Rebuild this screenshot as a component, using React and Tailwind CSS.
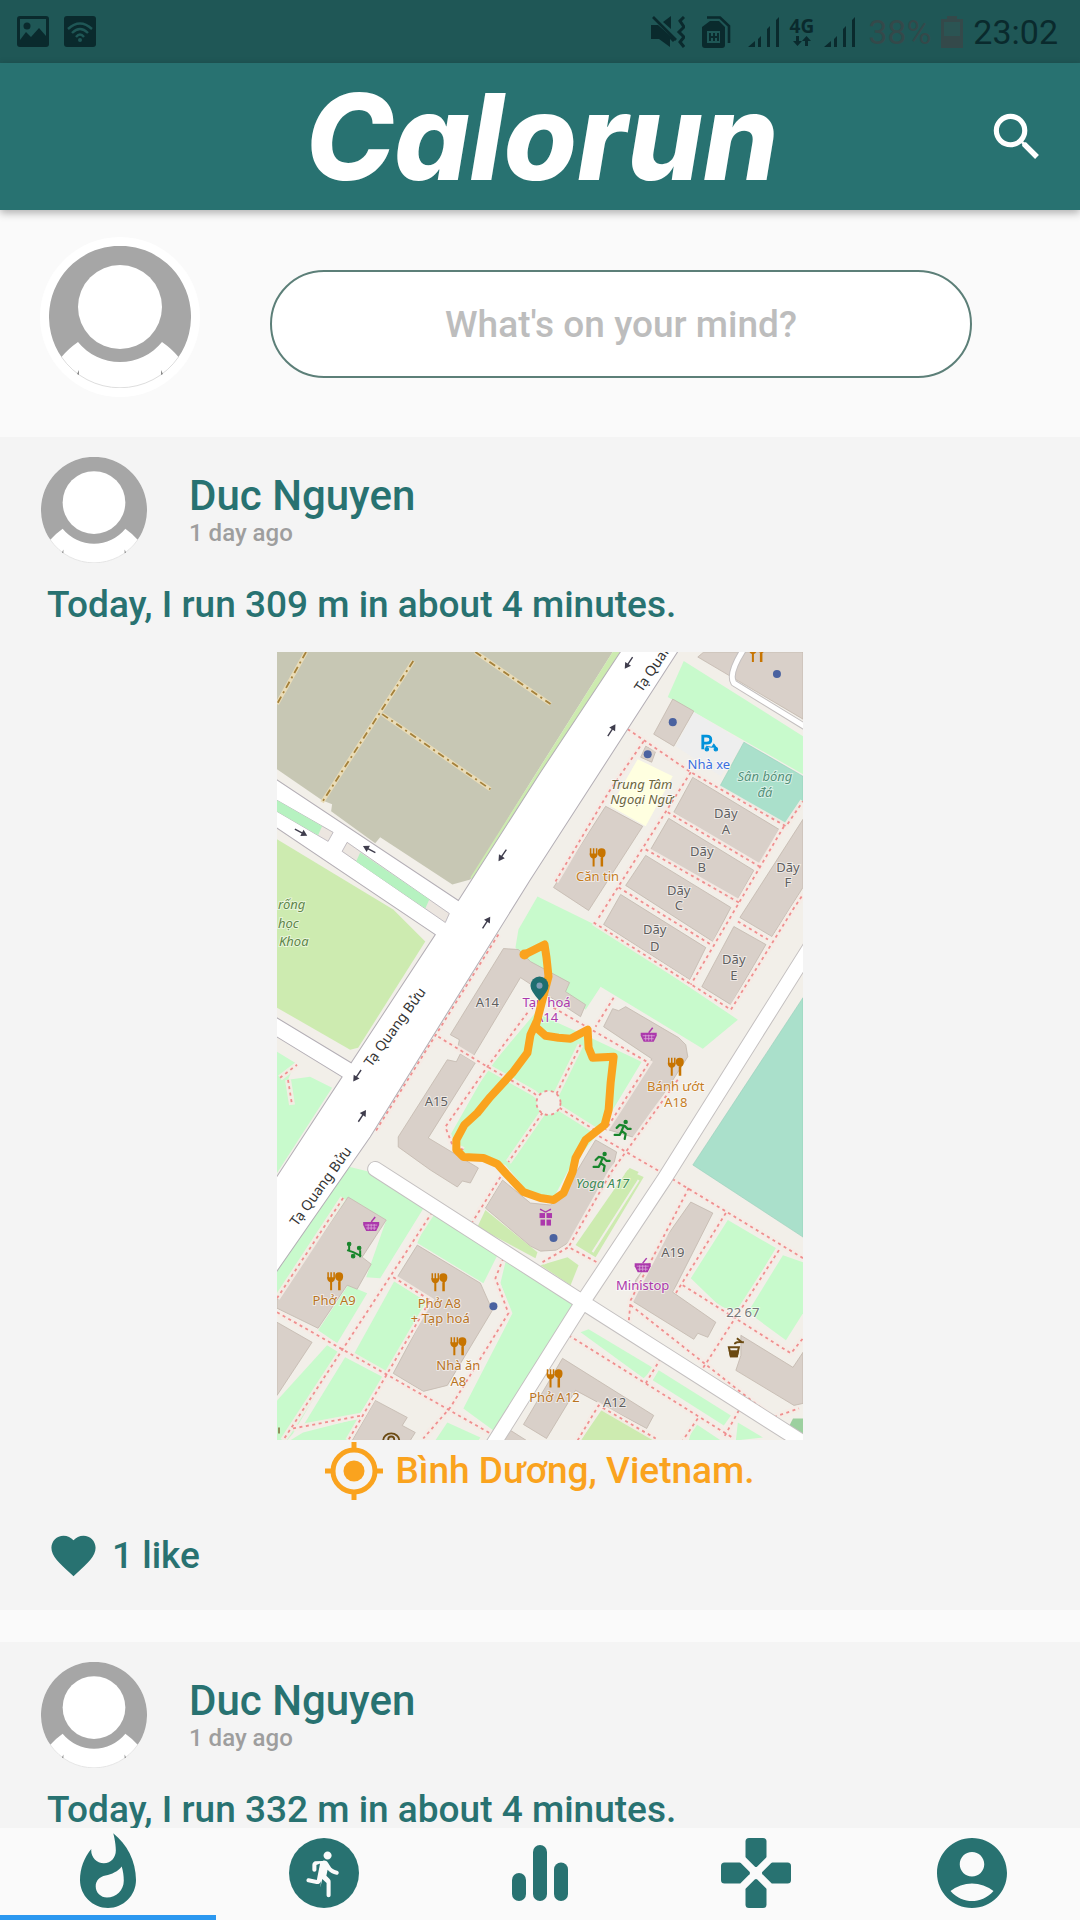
import React from "react";
import { MdSearch, MdWhatshot, MdAccountCircle, MdFavorite } from "react-icons/md";

const TEAL = "#287271";

/* ---------- status bar ---------- */

function Signal() {
  return (
    <svg width="32" height="32" viewBox="0 0 32 32" fill="currentColor" aria-hidden="true">
      <path d="M0 31 L7 25 V31 Z M10 23 L13 20 V31 H10 Z M19 13 L22 10 V31 H19 Z M28 4 L31 1 V31 H28 Z" />
    </svg>
  );
}

function StatusBar() {
  return (
    <div className="flex h-[63px] shrink-0 items-center justify-between bg-[#1f5756] pr-[22px] pl-[17px] text-[#0a2a2d]">
      <div className="flex gap-[15px]">
        <svg width="32" height="31" viewBox="0 0 32 31" aria-label="Image">
          <path fill="currentColor" fillRule="evenodd" d="M3 0H29Q32 0 32 3V28Q32 31 29 31H3Q0 31 0 28V3Q0 0 3 0ZM3 3V24L9 16L14 21L22 12L29 20V3Z" />
          <circle cx="10" cy="10" r="3.5" fill="currentColor" />
        </svg>
        <svg width="32" height="31" viewBox="0 0 32 31" aria-label="Wi-Fi">
          <rect width="32" height="31" rx="3" fill="currentColor" />
          <g fill="none" stroke="#1f5756" strokeWidth="2.4">
            <path d="M4 13Q16 2 28 13" />
            <path d="M8 17Q16 9 24 17" />
            <path d="M12 21Q16 16 20 21" />
          </g>
          <circle cx="16" cy="24" r="2" fill="#1f5756" />
        </svg>
      </div>
      <div className="flex items-center">
        <svg className="mr-[17px]" width="34" height="32" viewBox="0 0 34 32" aria-label="Vibrate">
          <path fill="currentColor" d="M0 9H7L24 24L22 26L19 23V31L8 23H0ZM12 6L20 0V13Z" />
          <path fill="none" stroke="currentColor" strokeWidth="2.6" d="M2 1L25 24" />
          <path fill="none" stroke="currentColor" strokeWidth="3" d="M33 1L29 5L33 11L28 16L33 21L29 26L33 31" />
        </svg>
        <svg className="mr-[17px]" width="29" height="32" viewBox="0 0 29 32" aria-label="SIM">
          <path fill="currentColor" fillRule="evenodd" d="M8 5H17L23 11V29Q23 32 20 32H3Q0 32 0 29V11ZM5 15V27H18V15Z" />
          <path fill="none" stroke="currentColor" strokeWidth="2" d="M8 17V25M12 17V25M16 17V25M8 21H16" />
          <path fill="none" stroke="currentColor" strokeWidth="2.6" d="M5 1.5H18L27 10V27" />
        </svg>
        <Signal />
        <div className="mx-[10px] flex flex-col items-center">
          <span className="font-['Open_Sans',sans-serif] text-[19px] leading-[18px] font-bold">4G</span>
          <svg width="18" height="12" viewBox="0 0 18 12" fill="currentColor" aria-hidden="true">
            <path d="M3 1H6V6H9L4.500 11L0 6H3ZM12 11H15V6H18L13.500 1L9 6H12Z" />
          </svg>
        </div>
        <Signal />
        <span className="ml-[12px] text-[34px] leading-[40px] text-[#34494a]">38%</span>
        <svg className="mx-[10px]" width="22" height="32" viewBox="0 0 22 32" aria-label="Battery">
          <path fill="#34494a" d="M6 0H16V3H22V32H0V3H6Z" />
          <rect x="3" y="6" width="16" height="14" fill="#2b5453" />
        </svg>
        <span className="text-[34px] leading-[40px]">23:02</span>
      </div>
    </div>
  );
}

/* ---------- avatar ---------- */

function Avatar({ className }) {
  return (
    <svg className={className} viewBox="0 0 142 142" role="img" aria-label="Avatar">
      <circle cx="71" cy="71" r="71" fill="#fff" stroke="none" />
      <path fill="#a6a6a6" d="M12.500 111A71 71 0 1 1 129.500 111Q123 103 113 96A54 54 0 0 1 29 96Q19 103 12.500 111Z" />
      <circle cx="71" cy="61" r="42" fill="#fff" />
      <path fill="none" stroke="#dedede" strokeWidth="1" d="M12.500 111A71 71 0 0 0 129.500 111" />
      <path fill="#8a8a8a" d="M28 128L30 124L30 129ZM114 128L112 124L112 129Z" />
    </svg>
  );
}

/* ---------- map ---------- */

const BUILDINGS = [
  "703,653 802,653 802,720 697,658",
  "672,700 693,712 673,747 653,735",
  "645,747 655,752 651,763 640,758",
  "605,807 642,827 588,911 553,888",
  "692,778 778,830 757,867 673,813",
  "668,819 753,871 735,903 650,850",
  "645,856 730,908 712,942 625,886",
  "620,895 705,948 689,980 603,925",
  "733,927 765,945 730,1005 701,987",
  "802,820 739,918 771,937 802,888",
  "503,949 518,950 530,962 569,983 565,992 585,1005 580,1017 520,978 472,1058 457,1050 459,1040 450,1035",
  "460,1054 475,1063 428,1138 478,1168 470,1183 462,1181 457,1187 430,1170 398,1147 398,1137 447,1060 456,1062",
  "625,1007 618,1011 612,1009 603,1027 651,1059 608,1130 635,1138 687,1057 685,1045 678,1038",
  "595,1140 616,1152 610,1178 567,1243 556,1250 540,1251 530,1246 485,1208 502,1180 530,1203 550,1205 565,1190",
  "690,1202 712,1213 672,1292 715,1322 707,1337 697,1333 693,1339 632,1301 635,1280",
  "740,1335 792,1367 802,1352 802,1403 793,1405 735,1370 740,1355",
  "562,1358 653,1415 646,1428 575,1390 546,1438 523,1424",
  "348,1197 386,1220 362,1257 371,1264 357,1289 347,1285 318,1328 277,1308 277,1300",
  "417,1245 480,1283 492,1310 447,1385 423,1391 393,1373 425,1313 432,1300 397,1277",
  "277,1322 312,1342 277,1395",
  "375,1400 407,1417 402,1425 415,1432 410,1440 352,1440",
  "507,1428 526,1440 500,1440",
];

const GREENS = [
  "683,662 802,737 802,775 667,698",
  "537,897 600,928 737,1020 702,1049 600,987 585,1010 530,965 515,948 518,930",
  "535,1013 590,1038 641,1062 600,1130 568,1170 553,1198 530,1195 505,1165 455,1150 450,1135 487,1070",
  "277,1052 295,1063 288,1080 310,1077 332,1088 277,1173",
  "342,1165 370,1172 424,1207 380,1278 366,1277 386,1220 348,1197 277,1300 277,1270",
  "348,1285 367,1293 337,1343 318,1330",
  "394,1281 427,1302 387,1373 352,1357",
  "430,1213 497,1255 483,1283 417,1243",
  "505,1262 530,1273 575,1303 493,1430 463,1408 512,1313 500,1283",
  "327,1345 340,1353 293,1433 287,1440 277,1440 277,1400",
  "345,1357 383,1377 360,1413 302,1427",
  "303,1432 358,1418 347,1440 290,1440",
  "447,1422 480,1437 478,1440 435,1440",
  "727,1220 775,1248 738,1310 720,1307 690,1278",
  "782,1255 802,1262 802,1313 785,1340 747,1312",
  "580,1332 588,1329 653,1368 643,1378",
  "658,1370 730,1415 723,1425 652,1380",
  "693,1422 720,1440 688,1440",
  "737,1422 762,1437 735,1440",
];

const GRASS = [
  "277,840 393,910 425,942 358,1048 350,1050 277,1008",
  "485,1210 537,1252 535,1258 477,1227",
  "627,1170 643,1177 595,1257 575,1245",
  "567,1257 578,1265 570,1285 540,1265",
  "629,1168 638,1172 634,1178 624,1174",
  "602,1408 655,1440 580,1440",
  "612,653 620,653 530,792 472,880 470,878 530,783",
];

const FOOTPATHS = [
  "498,935 375,1132",
  "438,1037 487,1067 533,1093 540,1099",
  "527,1013 487,1067 445,1127 452,1145 463,1150",
  "556,1094 580,1045",
  "559,1108 597,1132",
  "542,1113 508,1162",
  "627,730 690,773 785,827 802,802",
  "643,742 608,793 555,882",
  "690,773 597,920",
  "667,813 760,868",
  "645,850 738,903",
  "618,888 710,945",
  "593,923 730,1010 792,910 802,895",
  "783,827 690,985",
  "737,922 767,940",
  "553,1008 648,1063 605,1130",
  "613,998 595,1027",
  "593,1133 670,1178 802,1258",
  "677,1080 610,1173 568,1247",
  "542,1262 568,1247 598,1263",
  "688,1188 630,1300 628,1322",
  "725,1213 675,1293",
  "630,1305 772,1417 798,1408",
  "682,1285 790,1353 802,1338",
  "778,1250 702,1368",
  "568,1335 733,1438",
  "660,1358 645,1383",
  "738,1410 723,1437",
  "577,1440 598,1405 655,1438",
  "697,1418 682,1440",
  "343,1198 277,1298",
  "432,1212 283,1440",
  "277,1312 490,1433",
  "393,1277 430,1300 348,1440",
  "293,1428 362,1415",
  "503,1258 495,1278 508,1313 450,1407 423,1438",
  "500,1177 472,1222",
  "280,1078 297,1065",
  "288,1080 292,1105",
];

const TRACKS = ["306,653 277,705", "413,662 322,803", "382,715 490,790", "475,653 550,705"];

const LABELS = [
  ["Dãy", 725, 819, "#5f5f5f"], ["A", 725, 835, "#5f5f5f"],
  ["Dãy", 701, 857, "#5f5f5f"], ["B", 701, 873, "#5f5f5f"],
  ["Dãy", 678, 896, "#5f5f5f"], ["C", 678, 911, "#5f5f5f"],
  ["Dãy", 654, 934, "#5f5f5f"], ["D", 654, 951, "#5f5f5f"],
  ["Dãy", 733, 964, "#5f5f5f"], ["E", 733, 980, "#5f5f5f"],
  ["Dãy", 787, 873, "#5f5f5f"], ["F", 787, 888, "#5f5f5f"],
  ["A14", 487, 1007, "#5f5f5f"], ["A15", 436, 1106, "#5f5f5f"],
  ["A19", 672, 1257, "#5f5f5f"], ["A12", 614, 1407, "#5f5f5f"],
  ["22 67", 742, 1317, "#777"],
  ["Căn tin", 597, 882, "#c77d1e"],
  ["Phở A9", 334, 1305, "#b9741f"],
  ["Phở A8", 439, 1308, "#b9741f"], ["+ Tạp hoá", 440, 1323, "#b9741f"],
  ["Nhà ăn", 458, 1370, "#b9741f"], ["A8", 458, 1386, "#b9741f"],
  ["Phở A12", 554, 1402, "#b9741f"],
  ["Bánh ướt", 675, 1091, "#c77d1e"], ["A18", 675, 1107, "#c77d1e"],
  ["Ministop", 642, 1290, "#ac39ac"],
  ["Tạp hoá", 546, 1007, "#ac39ac"], ["A14", 546, 1022, "#ac39ac"],
  ["Nhà xe", 708, 770, "#3b6fe0"],
];

const ITALICS = [
  ["Sân bóng", 764, 782, "#55907a", "middle"], ["đá", 764, 798, "#55907a", "middle"],
  ["Trung Tâm", 641, 790, "#6b6540", "middle"], ["Ngoại Ngữ", 641, 805, "#6b6540", "middle"],
  ["Yoga A17", 602, 1188, "#3c8a55", "middle"],
  ["rống", 278, 910, "#60864a", "start"], ["học", 278, 928, "#60864a", "start"], ["Khoa", 279, 946, "#60864a", "start"],
];

function Fork({ x, y }) {
  return (
    <g transform={`translate(${x} ${y})`}>
      <path fill="none" stroke="#c77400" strokeWidth="1.500" d="M-7 -9V-3M-4 -9V-3M-1 -9V-3" />
      <path fill="#c77400" d="M-8 -4H0Q0 0 -3 1V9H-5V1Q-8 0 -8 -4ZM4 0Q0 -1 0 -5Q0 -9 4 -9Q8 -9 8 -5Q8 -1 5.500 0V9H3V0Z" />
    </g>
  );
}

function Basket({ x, y }) {
  return (
    <g transform={`translate(${x} ${y})`}>
      <path fill="#ac39ac" d="M-8 -2H8V1L5 7H-5L-8 1Z" />
      <path stroke="#d9a9d9" strokeWidth="0.800" d="M-6 1H6M-5 4H5M-3 0V6M0 0V6M3 0V6" />
      <path stroke="#ac39ac" strokeWidth="1.500" d="M0 -2L4 -7" />
    </g>
  );
}

function Runner({ x, y }) {
  return (
    <g transform={`translate(${x} ${y})`}>
      <circle cx="3" cy="-8" r="2.200" fill="#17852b" />
      <path fill="none" stroke="#17852b" strokeWidth="2.200" strokeLinecap="round" strokeLinejoin="round" d="M-6 -2L-3 -5L2 -4L5 -1H8M1 -4L-1 1L3 4L2 9M-1 1L-3 5H-8" />
    </g>
  );
}

function Arrow({ x, y, angle }) {
  return (
    <path transform={`translate(${x} ${y}) rotate(${angle})`} fill="#3f3d4d" d="M-7 -0.700H1V-3.500L7 0L1 3.500V0.700H-7Z" />
  );
}

function RouteMap() {
  const poly = (list, props) => list.map((p) => <polygon key={p} points={p} {...props} />);
  const lines = (list, props) => list.map((p) => <polyline key={p} points={p} fill="none" {...props} />);
  return (
    <svg className="w-[526px] max-w-full" viewBox="277 653 525 787" role="img" aria-label="Map of the run">
      <rect x="277" y="653" width="525" height="787" fill="#f2efe9" />
      <polygon points="277,653 612,653 530,783 470,880 452,885 380,838 375,844 331,812 332,805 322,801 277,770" fill="#c7c7b4" />
      {poly(GRASS, { fill: "#cdebb0" })}
      {poly(GREENS, { fill: "#c8facc" })}
      <polygon points="693,713 743,743 720,777 675,747" fill="#eeeeee" />
      <polygon points="743,743 802,777 802,802 785,827 719,787" fill="#aae0cb" stroke="#8fcab4" strokeWidth="0.500" />
      <polygon points="802,998 692,1165 802,1237" fill="#aae0cb" stroke="#8fcab4" strokeWidth="0.500" />
      <polygon points="637,760 672,777 645,827 610,807" fill="#ffffe0" />
      <polygon points="792,1418 802,1418 802,1435 788,1426" fill="#9cd09f" />
      <path d="M638 1180L592 1252" stroke="#f2efe9" strokeWidth="2" />
      {poly(BUILDINGS, { fill: "#d9d0c9", stroke: "#c3b8ae", strokeWidth: 0.8 })}

      {lines(TRACKS, { stroke: "#e9dcb8", strokeWidth: 4 })}
      {lines(TRACKS, { stroke: "#a5813a", strokeWidth: 1.8, strokeDasharray: "7 4 2 4" })}

      {lines(FOOTPATHS, { stroke: "#f5ebe6", strokeWidth: 6, strokeOpacity: 0.9 })}
      {lines(FOOTPATHS, { stroke: "#f08f8f", strokeWidth: 1.8, strokeDasharray: "3 3.500" })}
      <circle cx="548" cy="1103" r="12" fill="#f2efe9" stroke="#f08f8f" strokeWidth="1.800" strokeDasharray="3 3.500" />

      <g fill="none" strokeLinecap="round" strokeLinejoin="round">
        <g stroke="#c4c0c0">
          <path strokeWidth="16" d="M375 1169L582 1302L802 1442M812 943L663 1180L582 1302L492 1445" />
          <path strokeWidth="7" d="M743 650Q727 675 733 684L803 727" />
        </g>
        <g stroke="#fff">
          <path strokeWidth="14" d="M375 1169L582 1302L802 1442M812 943L663 1180L582 1302L492 1445" />
          <path strokeWidth="5" d="M743 650Q727 675 733 684L803 727" />
        </g>
      </g>
      <path
        fill="#fff"
        stroke="#b3aeb5"
        d="M270 776L458 901L540 773L623 648H680L530 880L370 1137L270 1281V1187L342 1077L270 1033V1014L351 1063L435 935L270 824Z"
      />
      <g stroke="#b3aeb5" strokeWidth="0.800">
        <polygon points="270,797 333,833 328,842 270,808" fill="#ece6e0" />
        <polygon points="347,843 449,914 445,923 342,852" fill="#ece6e0" />
        <polygon points="270,797 322,827 318,836 270,808" fill="#b6f2c0" stroke="none" />
        <polygon points="360,853 429,900 425,909 356,862" fill="#b6f2c0" stroke="none" />
      </g>

      <Arrow x={301} y={833} angle={28} />
      <Arrow x={369} y={850} angle={208} />
      <Arrow x={502} y={856} angle={124} />
      <Arrow x={486} y={923} angle={-57} />
      <Arrow x={628} y={664} angle={124} />
      <Arrow x={611} y={731} angle={-57} />
      <Arrow x={357} y={1076} angle={124} />
      <Arrow x={362} y={1116} angle={-57} />

      <g fill="#4a62a0">
        <circle cx="776" cy="675" r="4" />
        <circle cx="672" cy="723" r="4" />
        <circle cx="647" cy="755" r="4" />
        <circle cx="493" cy="1306" r="4" />
        <circle cx="553" cy="1238" r="4" />
      </g>
      <Fork x={756} y={654} />
      <Fork x={597} y={858} />
      <Fork x={675} y={1067} />
      <Fork x={335} y={1281} />
      <Fork x={439} y={1282} />
      <Fork x={458} y={1346} />
      <Fork x={554} y={1378} />
      <Basket x={648} y={1035} />
      <Basket x={371} y={1224} />
      <Basket x={642} y={1265} />
      <Runner x={622} y={1130} />
      <Runner x={601} y={1162} />
      <g fill="#17852b" stroke="#17852b">
        <circle cx="349" cy="1244" r="1.800" />
        <circle cx="359" cy="1248" r="1.800" />
        <circle cx="353" cy="1256" r="1.800" />
        <path fill="none" strokeWidth="2" d="M347 1250L353 1252L361 1256M349 1246V1251M360 1250V1257" />
      </g>
      <g fill="#ac39ac">
        <rect x="539" y="1213" width="5.500" height="5" />
        <rect x="546" y="1213" width="5.500" height="5" />
        <rect x="540" y="1219.500" width="4.500" height="6" />
        <rect x="546" y="1219.500" width="4.500" height="6" />
        <path fill="none" stroke="#ac39ac" strokeWidth="1.500" d="M545 1212Q538 1208 541 1210M545 1212Q552 1208 549 1210" />
      </g>
      <g fill="none" stroke="#6b4a12" strokeWidth="2">
        <path d="M728 1347H738L736 1356H730Z" />
        <path d="M729 1351H737L736 1356H730Z" fill="#6b4a12" />
        <path d="M734 1344Q734 1341 743 1342M736 1338L741 1342" />
      </g>
      <g fill="none" stroke="#6b4a12" strokeWidth="1.800">
        <path d="M383 1440A8 7 0 0 1 399 1440" />
        <circle cx="391" cy="1439" r="3" />
        <path d="M279 1427V1433" strokeWidth="1.200" />
      </g>
      <g fill="#0092da" stroke="#0092da">
        <path fill="none" strokeWidth="2.800" d="M702 750V737H706Q710 737 710 740.500Q710 744 706 744H702" />
        <circle cx="706" cy="750" r="1.800" />
        <circle cx="715" cy="750" r="1.800" />
        <path d="M705 747L711 748L713 745L716 749" />
      </g>

      <g fontFamily="'Noto Sans', 'Open Sans', sans-serif" fontSize="13" stroke="#fff" strokeOpacity="0.550" strokeWidth="2" paintOrder="stroke">
        {LABELS.map(([t, x, y, c]) => (
          <text key={t + x + y} x={x} y={y} fill={c} textAnchor="middle">{t}</text>
        ))}
        <g fontStyle="italic">
          {ITALICS.map(([t, x, y, c, a]) => (
            <text key={t} x={x} y={y} fill={c} textAnchor={a}>{t}</text>
          ))}
        </g>
        <g fill="#333" fontSize="14">
          <text transform="translate(371 1068) rotate(-54)">Tạ Quang Bửu</text>
          <text transform="translate(297 1227) rotate(-54)">Tạ Quang Bửu</text>
          <text transform="translate(641 694) rotate(-56)">Tạ Quan</text>
        </g>
      </g>

      <path
        fill="none"
        stroke="#faa31e"
        strokeWidth="8"
        strokeLinecap="round"
        strokeLinejoin="round"
        d="M524 955L544 945L546 958L548 977L535 1027L545 1036L558 1038L570 1039L587 1030L588 1048L592 1058L613 1057L610 1083L608 1110L604 1125L585 1140L575 1158L572 1172L563 1193L553 1200L540 1198L523 1192L506 1174L497 1164L483 1158L463 1157L456 1150L456 1140L464 1125L477 1113L490 1097L512 1073L527 1053L530 1035L536 1022"
      />
      <circle cx="524" cy="955" r="5" fill="#faa31e" />
      <path fill="#1f6e70" d="M539 1001Q530 991 530 986A9 9 0 0 1 548 986Q548 991 539 1001Z" />
      <circle cx="539" cy="986" r="3" fill="#7f9db4" />
    </svg>
  );
}

/* ---------- feed ---------- */

function Post({ name, time, text, place, likes }) {
  return (
    <article className="bg-[#f4f4f4] pt-[20px] pb-[28px]">
      <header className="flex items-center pl-[41px]">
        <Avatar className="size-[106px] shrink-0" />
        <div className="mt-[2px] ml-[42px]">
          <h2 className="text-[42px] leading-[44px] font-medium text-[#287271]">{name}</h2>
          <p className="text-[24px] leading-[30px] font-medium text-[#9e9e9e]">{time}</p>
        </div>
      </header>
      <p className="mt-[20px] pl-[47px] text-[37px] leading-[44px] font-medium text-[#287271]">{text}</p>
      <div className="mt-[25px] flex justify-center">
        <RouteMap />
      </div>
      <div className="flex items-center justify-center gap-[12px] text-[#faa31e]">
        <svg className="my-[2px]" width="58" height="58" viewBox="0 0 58 58" fill="none" stroke="currentColor" aria-hidden="true">
          <circle cx="29" cy="29" r="21" strokeWidth="5" />
          <circle cx="29" cy="29" r="10.500" fill="currentColor" stroke="none" />
          <path strokeWidth="5" d="M29 0V8M29 50V58M0 29H8M50 29H58" />
        </svg>
        <p className="text-[37px] leading-[44px] font-medium">{place}</p>
      </div>
      <button type="button" className="mt-[27px] ml-[47px] flex items-center gap-[12px] text-[37px] leading-[44px] font-medium text-[#287271]">
        <MdFavorite size={53} />
        {likes}
      </button>
    </article>
  );
}

/* ---------- bottom navigation ---------- */

const RunIcon = () => (
  <svg width="84" height="84" viewBox="0 0 24 24" aria-hidden="true">
    <circle cx="12" cy="12" r="10" fill={TEAL} />
    <g transform="translate(5.200 5) scale(0.580)">
      <path fill="#fafafa" d="M13.490 5.480c1.100 0 2-.9 2-2s-.9-2-2-2-2 .9-2 2 .9 2 2 2zm-3.600 13.900 1-4.400 2.100 2v6c0 .55.450 1 1 1s1-.45 1-1v-6.640c0-.55-.22-1.070-.62-1.450l-1.480-1.410.6-3c1.070 1.240 2.620 2.130 4.360 2.410.6.090 1.140-.39 1.140-1 0-.49-.36-.9-.85-.98-1.520-.25-2.780-1.150-3.450-2.330l-1-1.600c-.56-.89-1.680-1.250-2.660-.84L7.210 6.280c-.74.320-1.220 1.040-1.220 1.850v2.350c0 .55.450 1 1 1s1-.45 1-1v-2.400l1.800-.7-1.600 8.100-3.920-.8c-.54-.11-1.070.240-1.180.78v.040c-.11.540.240 1.070.78 1.180l4.110.82c1.060.210 2.100-.46 2.310-1.520z" />
    </g>
  </svg>
);

const ChartIcon = () => (
  <svg width="84" height="84" viewBox="0 0 24 24" fill={TEAL} aria-hidden="true">
    <rect x="4" y="12" width="4" height="8" rx="2" />
    <rect x="10" y="4" width="4" height="16" rx="2" />
    <rect x="16" y="9" width="4" height="11" rx="2" />
  </svg>
);

const GamesIcon = () => (
  <svg width="84" height="84" viewBox="0 0 24 24" fill={TEAL} aria-hidden="true">
    {[0, 90, 180, 270].map((a) => (
      <path key={a} transform={`rotate(${a} 12 12)`} d="M9 3Q9 2 10 2H14Q15 2 15 3V7.290Q15 7.500 14.850 7.650L12.350 10.150Q12 10.450 11.650 10.150L9.150 7.650Q9 7.500 9 7.290Z" />
    ))}
  </svg>
);

const TABS = [
  ["Feed", <MdWhatshot size={84} color={TEAL} />],
  ["Run", <RunIcon />],
  ["Statistics", <ChartIcon />],
  ["Games", <GamesIcon />],
  ["Profile", <MdAccountCircle size={84} color={TEAL} />],
];

export default function App() {
  return (
    <div className="flex h-screen flex-col overflow-hidden bg-[#fafafa] font-['Roboto',sans-serif]">
      <StatusBar />
      <header className="z-10 grid h-[147px] shrink-0 grid-cols-[1fr_auto_1fr] items-center bg-[#287271] shadow-[0_3px_8px_rgba(0,0,0,0.3)]">
        <h1 className="col-start-2 pl-[4px] font-['Inter',sans-serif] text-[119px] leading-[120px] font-extrabold text-white italic">Calorun</h1>
        <button type="button" aria-label="Search" className="mr-[32px] justify-self-end text-white">
          <MdSearch size={62} />
        </button>
      </header>

      <main className="flex-1 overflow-hidden">
        <section className="flex items-start pt-[27px] pr-[108px] pb-[40px] pl-[40px]">
          <div className="flex size-[160px] shrink-0 items-center justify-center rounded-full bg-white">
            <Avatar className="size-[142px]" />
          </div>
          <input
            type="text"
            aria-label="What's on your mind?"
            placeholder="What's on your mind?"
            className="mt-[33px] ml-[70px] h-[108px] min-w-0 flex-1 rounded-full border-2 border-[#5c7f78] bg-white text-center text-[37px] font-medium outline-none placeholder:text-[#bdbdbd]"
          />
        </section>
        <div className="flex flex-col gap-[32px]">
          <Post name="Duc Nguyen" time="1 day ago" text="Today, I run 309 m in about 4 minutes." place="Bình Dương, Vietnam." likes="1 like" />
          <Post name="Duc Nguyen" time="1 day ago" text="Today, I run 332 m in about 4 minutes." place="Bình Dương, Vietnam." likes="1 like" />
        </div>
      </main>

      <nav className="grid shrink-0 grid-cols-5 bg-[#fafafa]">
        {TABS.map(([label, icon], i) => (
          <button
            key={label}
            type="button"
            aria-label={label}
            className={i === 0 ? "flex justify-center border-b-[5px] border-[#2b98f0] pt-[3px]" : "flex justify-center border-b-[5px] border-transparent pt-[3px]"}
          >
            {icon}
          </button>
        ))}
      </nav>
    </div>
  );
}
